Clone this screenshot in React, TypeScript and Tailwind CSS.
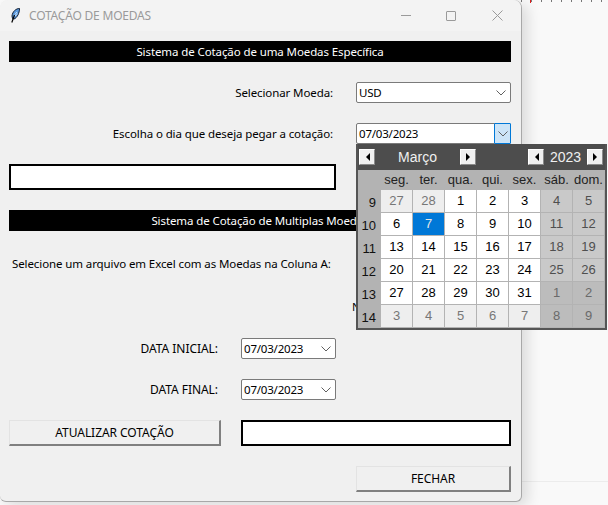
import type { ReactNode } from "react";

const SEGOE = "font-['Noto_Sans','Open_Sans',sans-serif]";
const ARIAL = "font-['Liberation_Sans',Arial,sans-serif]";
const LABEL = "text-[11.5px] tracking-[-0.1px] text-black";
const CAPS = "text-[12px] tracking-[-0.05px] text-black";

type Cell = { d: number; kind: "day" | "other" | "weekend" | "otherWeekend" | "selected" };

const cellStyle: Record<Cell["kind"], string> = {
  day: "bg-white text-black",
  other: "bg-[#eeeeee] text-[#777777]",
  weekend: "bg-[#c9c9c9] text-[#4f4f4f]",
  otherWeekend: "bg-[#bcbcbc] text-[#6a6a6a]",
  selected: "bg-[#0078d7] text-[#e6e6e6]",
};

const weeks: { n: number; days: number[] }[] = [
  { n: 9, days: [27, 28, 1, 2, 3, 4, 5] },
  { n: 10, days: [6, 7, 8, 9, 10, 11, 12] },
  { n: 11, days: [13, 14, 15, 16, 17, 18, 19] },
  { n: 12, days: [20, 21, 22, 23, 24, 25, 26] },
  { n: 13, days: [27, 28, 29, 30, 31, 1, 2] },
  { n: 14, days: [3, 4, 5, 6, 7, 8, 9] },
];

function kindOf(w: number, i: number): Cell["kind"] {
  const outside = (w === 0 && i < 2) || (w === 4 && i > 4) || w === 5;
  if (w === 1 && i === 1) return "selected";
  if (i > 4) return outside ? "otherWeekend" : "weekend";
  return outside ? "other" : "day";
}

function Chevron() {
  return (
    <svg width="10" height="6" viewBox="0 0 10 6" fill="none" stroke="#606060" strokeWidth="1">
      <path d="M0.5 0.5 L5 5 L9.5 0.5" />
    </svg>
  );
}

function Combo({ value, className, focused }: { value: string; className: string; focused?: boolean }) {
  return (
    <div className={`flex h-[21px] items-center justify-between rounded-[2px] border border-[#7a7a7a] bg-white text-[11.5px] tracking-[-0.2px] text-black ${className}`}>
      <span className="pl-[2px] leading-[19px]">{value}</span>
      {focused ? (
        <span className="-m-px flex h-[21px] w-[17px] items-center justify-center rounded-[1px] border border-[#0078d7] bg-[#cce4f7]">
          <Chevron />
        </span>
      ) : (
        <span className="flex w-[17px] justify-center pr-[2px]">
          <Chevron />
        </span>
      )}
    </div>
  );
}

function Banner({ children }: { children: ReactNode }) {
  return (
    <div className="flex h-[21px] items-center justify-center bg-black text-[11.5px] tracking-[-0.1px] text-white">{children}</div>
  );
}

function Arrow({ left, className }: { left?: boolean; className: string }) {
  return (
    <button className={`flex h-[16px] w-[16px] items-center justify-center border border-b-[#8a8a8a] border-l-white border-r-[#8a8a8a] border-t-white bg-[#f0f0f0] ${className}`}>
      <svg width="5" height="8" viewBox="0 0 5 8" fill="#000">
        {left ? <path d="M5 0 L5 8 L1 4 Z" /> : <path d="M0 0 L0 8 L4 4 Z" />}
      </svg>
    </button>
  );
}

function Calendar() {
  const heads = ["seg.", "ter.", "qua.", "qui.", "sex.", "sáb.", "dom."];
  return (
    <div className={`absolute left-[356px] top-[144px] w-[251px] border-2 border-t-0 border-[#555555] bg-[#b3b3b3] ${ARIAL}`}>
      <div className="flex h-[26px] items-center bg-[#4d4d4d] pl-[1px] text-[14px] text-[#f0f0f0]">
        <Arrow left className="" />
        <span className="w-[85px] text-center">Março</span>
        <Arrow className="" />
        <Arrow left className="ml-[52px]" />
        <span className="w-[43px] text-center">2023</span>
        <Arrow className="" />
      </div>
      <div className="grid grid-cols-[22px_repeat(7,31px)] gap-[1px] pb-[1px] text-[13px]">
        <div className="h-[19px]" />
        {heads.map((h) => (
          <div key={h} className="flex h-[19px] items-center justify-center text-[#222222]">{h}</div>
        ))}
        {weeks.map((w, wi) => (
          <div key={w.n} className="contents">
            <div className="flex h-[22px] items-center justify-end pr-[4px] pt-[3px] text-[#111111]">{w.n}</div>
            {w.days.map((d, i) => (
              <div key={i} className={`flex h-[22px] items-center justify-center ${cellStyle[kindOf(wi, i)]}`}>{d}</div>
            ))}
          </div>
        ))}
      </div>
    </div>
  );
}

function FeatherIcon() {
  return (
    <svg width="9" height="15" viewBox="0 0 9 15">
      <path d="M8.5 0.5 C5 0.5 1.5 3.5 1 8 L1.5 10.5 L3 11 C6 10 8.5 5 8.5 0.5 Z" fill="#5b9be0" stroke="#0d1a30" strokeWidth="1" />
      <path d="M6 4 L4 6.5 M6.5 6 L4 8" stroke="#cfe2f7" strokeWidth="1" fill="none" />
      <path d="M3.5 7 L0.8 14.5" stroke="#000" strokeWidth="1.2" fill="none" />
    </svg>
  );
}

function TitleBar() {
  return (
    <div className="flex h-[31px] items-center rounded-t-[8px] bg-[#f3f3f3] pl-[11px]">
      <FeatherIcon />
      <span className="ml-[9px] text-[12px] tracking-[-0.2px] text-[#9a9a9a]">COTAÇÃO DE MOEDAS</span>
      <div className="ml-auto flex items-center">
        <div className="h-px w-[10px] bg-[#9a9a9a]" />
        <div className="ml-[35px] h-[10px] w-[10px] rounded-[1px] border border-[#9a9a9a]" />
        <svg className="ml-[36px] mr-[18px]" width="11" height="11" viewBox="0 0 11 11" stroke="#9a9a9a" strokeWidth="1">
          <path d="M0.5 0.5 L10.5 10.5 M10.5 0.5 L0.5 10.5" />
        </svg>
      </div>
    </div>
  );
}

function RaisedButton({ label, className }: { label: string; className: string }) {
  return (
    <button className={`flex h-[26px] items-center justify-center border border-b-2 border-r-2 border-b-[#808080] border-l-[#e3e3e3] border-r-[#808080] border-t-[#e3e3e3] bg-[#f0f0f0] ${CAPS} ${className}`}>
      {label}
    </button>
  );
}

export default function App() {
  return (
    <div className={`relative h-[505px] w-[608px] overflow-hidden bg-[#f9f9f9] ${SEGOE}`}>
      {/* ruler ticks and sheet line from the app behind */}
      <div className="absolute left-[521px] top-0 h-[2px] w-[87px] bg-[repeating-linear-gradient(90deg,#777777_0,#777777_1px,transparent_1px,transparent_10px)]" />
      <div className="absolute left-[530px] top-0 h-[3px] w-px bg-[#e02020]" />
      <div className="absolute left-[521px] top-[481px] h-px w-[87px] bg-[#ececec]" />

      <div className="absolute left-0 top-0 h-[502px] w-[522px] rounded-b-[6px] rounded-t-[8px] border-r border-b border-[#a8a8a8] bg-[#f0f0f0] shadow-[6px_4px_14px_rgba(0,0,0,0.12)]">
        <TitleBar />
        <div className="flex flex-col pl-[9px] pr-[10px] pt-[10px]">
          <Banner>Sistema de Cotação de uma Moedas Específica</Banner>

          <div className={`mt-[20px] flex items-center justify-end ${LABEL}`}>
            <span className="mr-[23px]">Selecionar Moeda:</span>
            <Combo value="USD" className="w-[155px]" />
          </div>

          <div className={`mt-[20px] flex items-center justify-end ${LABEL}`}>
            <span className="mr-[23px]">Escolha o dia que deseja pegar a cotação:</span>
            <Combo value="07/03/2023" className="w-[155px]" focused />
          </div>

          <div className="mt-[20px] h-[26px] w-[327px] border-2 border-black bg-white" />

          <div className="mt-[20px]">
            <Banner>Sistema de Cotação de Multiplas Moedas</Banner>
          </div>

          <div className={`mt-[24px] pl-[3px] leading-[18px] ${LABEL}`}>
            Selecione um arquivo em Excel com as Moedas na Coluna A:
          </div>

          <div className={`mt-[25px] h-[18px] pl-[343px] leading-[18px] ${LABEL}`}>N</div>

          <div className={`mt-[22px] flex items-center ${CAPS}`}>
            <span className="w-[209px] text-right">DATA INICIAL:</span>
            <Combo value="07/03/2023" className="ml-[23px] w-[95px]" />
          </div>

          <div className={`mt-[20px] flex items-center ${CAPS}`}>
            <span className="w-[209px] text-right">DATA FINAL:</span>
            <Combo value="07/03/2023" className="ml-[23px] w-[95px]" />
          </div>

          <div className="mt-[20px] flex items-center">
            <RaisedButton label="ATUALIZAR COTAÇÃO" className="w-[212px]" />
            <div className="ml-[20px] h-[26px] w-[270px] border-2 border-black bg-white" />
          </div>

          <div className="mt-[20px] flex justify-end">
            <RaisedButton label="FECHAR" className="w-[155px]" />
          </div>
        </div>
      </div>

      <Calendar />
    </div>
  );
}
